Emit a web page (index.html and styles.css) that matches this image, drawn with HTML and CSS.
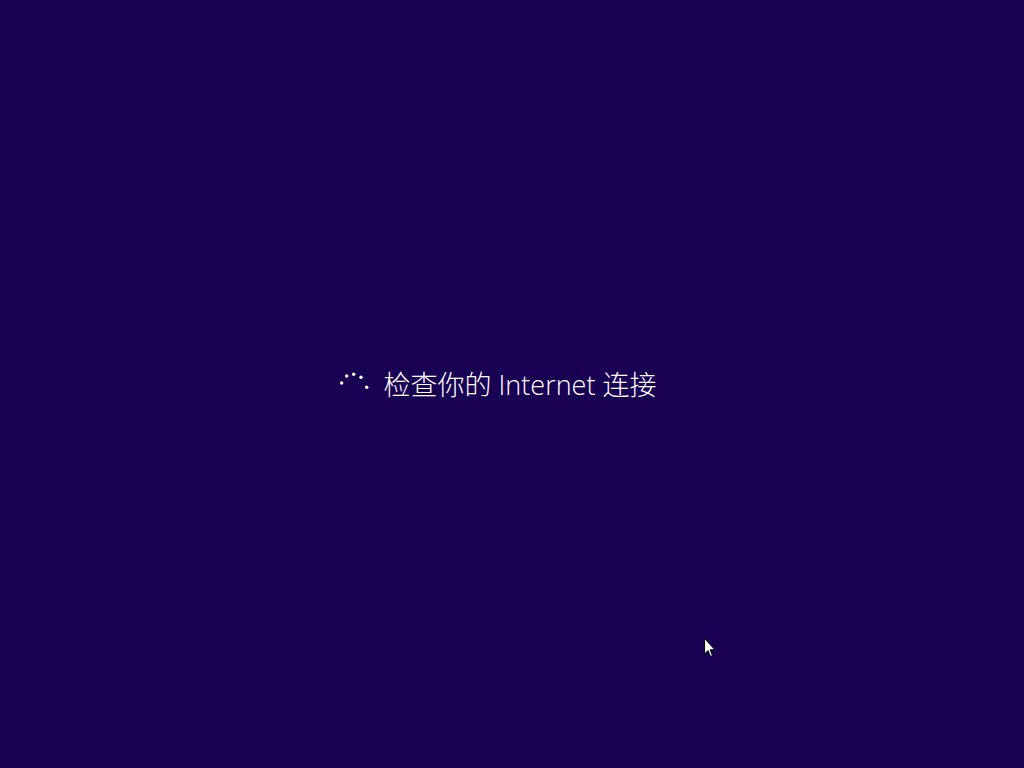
FILE: index.html
```html
<!DOCTYPE html>
<html lang="zh-CN">
<head>
<meta charset="utf-8">
<title>检查你的 Internet 连接</title>
<link rel="stylesheet" href="styles.css">
</head>
<body>
<main class="screen">
  <div class="status">
    <svg class="spinner" width="32" height="21" viewBox="0 0 32 21" aria-hidden="true">
      <circle cx="3.7" cy="13" r="1.7"/>
      <circle cx="8.7" cy="6" r="1.7"/>
      <circle cx="15.7" cy="4.3" r="1.7"/>
      <circle cx="23" cy="7.3" r="1.7"/>
      <circle cx="28.7" cy="17.3" r="1.7"/>
    </svg>
    <span class="message">检查你的 Internet 连接</span>
  </div>
  <svg class="cursor" width="13" height="20" viewBox="0 0 13 20" aria-hidden="true">
    <path d="M0.5 0.5 L0.5 16 L4 12.5 L6.5 18.5 L8.5 17.6 L6.2 11.8 L11 11.8 Z" fill="#fff" stroke="#000" stroke-width="1"/>
  </svg>
</main>
</body>
</html>
```
FILE: styles.css
```css
html, body {
  margin: 0;
  padding: 0;
  width: 100%;
  height: 100%;
  background: #180052;
  overflow: hidden;
}

.screen {
  position: relative;
  width: 1024px;
  height: 768px;
  display: flex;
  align-items: center;
  justify-content: center;
  padding-right: 30px;
  box-sizing: border-box;
}

.status {
  display: flex;
  align-items: center;
  gap: 14px;
  margin-top: 2px;
}

.spinner {
  fill: #ffffff;
  margin-top: -10px;
}

.message {
  color: #ffffff;
  font-family: "Segoe UI", "Open Sans", "Noto Sans CJK SC", sans-serif;
  font-size: 27px;
  font-weight: 300;
  line-height: 34px;
  white-space: nowrap;
}

.cursor {
  position: absolute;
  left: 704px;
  top: 638px;
}
```
